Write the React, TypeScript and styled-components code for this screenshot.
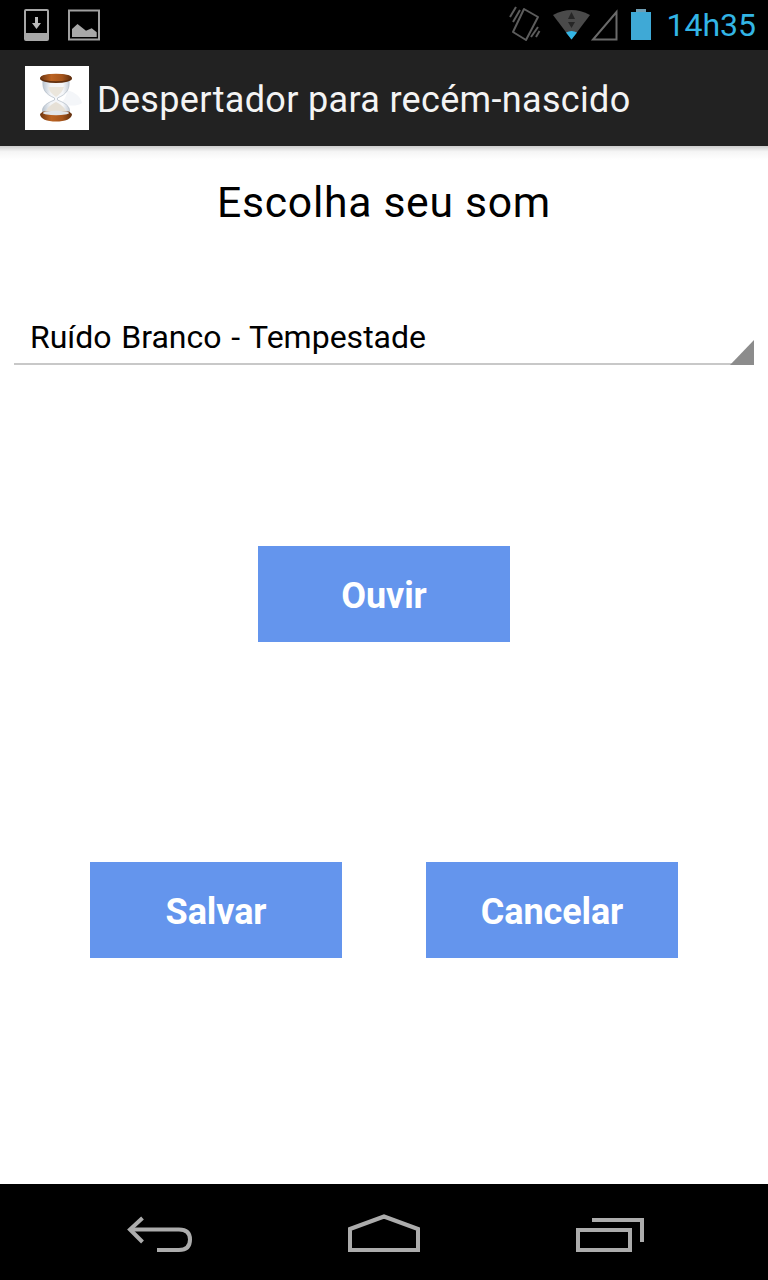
import React from 'react';
import styled, {createGlobalStyle} from 'styled-components';

const Global = createGlobalStyle`
    html, body {
        margin: 0;
        padding: 0;
        background: #fff;
    }
    body {
        font-family: Roboto, "Liberation Sans", sans-serif;
    }
`

const Screen = styled.div`
    width: 768px;
    height: 1280px;
    display: flex;
    flex-direction: column;
    overflow: hidden;
`

const StatusBar = styled.div`
    height: 50px;
    flex: none;
    background: #000;
    display: flex;
    align-items: center;
    justify-content: space-between;
    padding: 0 12px 0 24px;
`

const IconGroup = styled.div`
    display: flex;
    align-items: center;
    gap: ${(p: {$gap: number}) => p.$gap}px;
`

const Clock = styled.span`
    color: #33b5e5;
    font-size: 32px;
    line-height: 50px;
    margin-left: 2px;
`

const ActionBar = styled.div`
    height: 96px;
    flex: none;
    background: #222;
    display: flex;
    align-items: center;
    padding-left: 25px;
    position: relative;
    z-index: 1;

    &::after {
        content: "";
        position: absolute;
        left: 0;
        right: 0;
        top: 100%;
        height: 14px;
        background: linear-gradient(rgba(0, 0, 0, 0.2), rgba(0, 0, 0, 0.04) 40%, rgba(0, 0, 0, 0));
    }
`

const AppIcon = styled.div`
    width: 64px;
    height: 64px;
    background: #fff;
    display: flex;
    margin-right: 8px;
`

const AppTitle = styled.h1`
    margin: 0;
    padding-top: 4px;
    color: #f4f4f4;
    font-size: 36px;
    font-weight: 400;
    letter-spacing: 0.33px;
`

const Content = styled.main`
    flex: 1;
    background: #fff;
    display: flex;
    flex-direction: column;
    align-items: center;
`

const Heading = styled.h2`
    margin: 28px 0 0;
    font-size: 42.7px;
    line-height: 56px;
    font-weight: 400;
    letter-spacing: 0.7px;
    color: #000;
`

const Spinner = styled.div`
    width: 740px;
    height: 60px;
    margin-top: 75px;
    box-sizing: border-box;
    border-bottom: 2px solid #c8c8c8;
    padding-left: 16px;
    font-size: 32px;
    line-height: 64px;
    word-spacing: 1.75px;
    color: #000;
    position: relative;
`

const SpinnerArrow = styled.svg`
    position: absolute;
    right: 0;
    bottom: -2px;
`

const Button = styled.button`
    width: 252px;
    height: 96px;
    border: none;
    padding: 4px 0 0;
    background: #6495ed;
    color: #fff;
    font-family: inherit;
    font-size: 36px;
    font-weight: 700;
    letter-spacing: -0.1px;
`

const ListenButton = styled(Button)`
    margin-top: 181px;
`

const ButtonRow = styled.div`
    margin-top: 220px;
    display: flex;
    gap: 84px;
`

const NavBar = styled.nav`
    height: 96px;
    flex: none;
    background: #000;
    display: grid;
    grid-template-columns: 127px 66px 155px 72px 156px 68px;
    align-items: center;
`

const NavCell = styled.div`
    grid-column: ${(p: {$col: number}) => p.$col};
    display: flex;
`

const HourGlass = () => (
    <svg width="64" height="64" viewBox="0 0 64 64">
        <defs>
            <linearGradient id="wood" x1="0" x2="1" y1="0" y2="0">
                <stop offset="0" stopColor="#6e3510"/>
                <stop offset="0.35" stopColor="#bb6322"/>
                <stop offset="0.7" stopColor="#a5541b"/>
                <stop offset="1" stopColor="#5f2e0e"/>
            </linearGradient>
            <linearGradient id="glass" x1="0" x2="1" y1="0" y2="0">
                <stop offset="0" stopColor="#b8c3cf"/>
                <stop offset="0.3" stopColor="#f2f4f7"/>
                <stop offset="0.75" stopColor="#f6f7f9"/>
                <stop offset="1" stopColor="#c6ced8"/>
            </linearGradient>
        </defs>
        <path d="M42 24 C50 26 56 31 57 37 C52 41 44 39 34 39 C39 35 42 30 42 24Z" fill="#f4f6f9"/>
        <path d="M18 14 C17 23 20 28 29.500 32 L29.500 34 C19 38 16 42 18 48 L44 48 C46 42 43 38 32.500 34 L32.500 32 C42 28 45 23 44 14Z" fill="url(#glass)" stroke="#b0bac6" strokeWidth="0.7"/>
        <path d="M23 21 C24 25 27 28 31 31 C35 28 38 25 39 21Z" fill="#ebe6dc"/>
        <path d="M21 46 C22 41 27 38 31 36 C35 38 40 41 41 46Z" fill="#e6e0d6"/>
        <ellipse cx="31" cy="12.500" rx="16" ry="4.500" fill="#5f2e0e"/>
        <ellipse cx="31" cy="11.500" rx="15.500" ry="3.800" fill="url(#wood)"/>
        <path d="M15 48 C15 53 22 55.500 31 55.500 C40 55.500 47 53 47 48 L44 45.500 L18 45.500Z" fill="url(#wood)"/>
        <ellipse cx="31" cy="47" rx="13" ry="2.200" fill="#e2e6eb"/>
    </svg>
)

const Sd = () => (
    <svg width="26" height="32" viewBox="0 0 26 32">
        <path d="M1 2 Q1 1 2 1 H23 Q24 1 24 2 V30 Q24 31 23 31 H2 Q1 31 1 30Z" fill="none" stroke="#a8a8a8" strokeWidth="2"/>
        <rect x="1" y="24" width="23" height="7" fill="#a8a8a8"/>
        <path d="M11 8 H14 V14 H17 L12.500 20 L8 14 H11Z" fill="#bbb"/>
    </svg>
)

const Picture = () => (
    <svg width="32" height="32" viewBox="0 0 32 32">
        <rect x="1" y="1.500" width="30" height="29" fill="none" stroke="#a0a0a0" strokeWidth="2"/>
        <path d="M4 28 V20 L9.500 15 L18 21.700 L23.700 19.300 L28.700 23.300 V28Z" fill="#a8a8a8"/>
    </svg>
)

const Vibrate = () => (
    <svg width="35" height="42" viewBox="0 0 35 42" fill="none" stroke="#5c5c5c" strokeWidth="2">
        <path d="M18 5 L32 13 L20 36 L7 28Z" strokeLinejoin="round"/>
        <path d="M4 13 L10 3 M7 18 L14 6 M25 33 L32 23 M30 33 L33.500 27"/>
    </svg>
)

const Wifi = () => (
    <svg width="37" height="32" viewBox="0 0 37 32">
        <path d="M0 6 Q18.500 -4 37 6 L18.500 30.500Z" fill="#4a4a4a"/>
        <path d="M18.500 3 L22 10 H15Z" fill="#262626"/>
        <path d="M18.500 19 L15 13 H22Z" fill="#262626"/>
        <path d="M13 23.500 Q18.500 20.500 24 23.500 L18.500 30.500Z" fill="#33b5e5"/>
    </svg>
)

const Signal = () => (
    <svg width="28" height="32" viewBox="0 0 28 32">
        <path d="M26.500 3 V30.500 H3Z" fill="none" stroke="#6a6a6a" strokeWidth="2"/>
    </svg>
)

const Battery = () => (
    <svg width="22" height="32" viewBox="0 0 22 32">
        <path d="M6 0 H16 V3 H21 V31 H1 V3 H6Z" fill="#3fa9d6"/>
        <rect x="6" y="0" width="10" height="3" fill="#6d9db3"/>
    </svg>
)

const Back = () => (
    <svg width="66" height="40" viewBox="0 0 66 40" fill="none" stroke="#acacac" strokeWidth="4">
        <path d="M15.500 6 L3 17.500 L15.500 30"/>
        <path d="M3 17.500 H52 Q63 17.500 63 27.500 Q63 38 52 38 H30"/>
    </svg>
)

const Home = () => (
    <svg width="72" height="40" viewBox="0 0 72 40" fill="none" stroke="#acacac" strokeWidth="4">
        <path d="M2 17 L36 4.500 L70 17 V38 H2Z"/>
    </svg>
)

const Recent = () => (
    <svg width="68" height="40" viewBox="0 0 68 40" fill="none" stroke="#acacac" strokeWidth="4">
        <rect x="2" y="18" width="52" height="20"/>
        <path d="M16 8 H66 V30"/>
    </svg>
)

class App extends React.Component {
    render() {
        return (
            <Screen>
                <Global/>
                <StatusBar>
                    <IconGroup $gap={18}>
                        <Sd/>
                        <Picture/>
                    </IconGroup>
                    <IconGroup $gap={12}>
                        <Vibrate/>
                        <IconGroup $gap={0}>
                            <Wifi/>
                            <Signal/>
                        </IconGroup>
                        <Battery/>
                        <Clock>14h35</Clock>
                    </IconGroup>
                </StatusBar>
                <ActionBar>
                    <AppIcon><HourGlass/></AppIcon>
                    <AppTitle>Despertador para recém-nascido</AppTitle>
                </ActionBar>
                <Content>
                    <Heading>Escolha seu som</Heading>
                    <Spinner>
                        Ruído Branco - Tempestade
                        <SpinnerArrow width="24" height="25" viewBox="0 0 24 25">
                            <path d="M24 0 V25 H0Z" fill="#8c8c8c"/>
                        </SpinnerArrow>
                    </Spinner>
                    <ListenButton>Ouvir</ListenButton>
                    <ButtonRow>
                        <Button>Salvar</Button>
                        <Button>Cancelar</Button>
                    </ButtonRow>
                </Content>
                <NavBar>
                    <NavCell $col={2}><Back/></NavCell>
                    <NavCell $col={4}><Home/></NavCell>
                    <NavCell $col={6}><Recent/></NavCell>
                </NavBar>
            </Screen>
        );
    }
}

export default App;
